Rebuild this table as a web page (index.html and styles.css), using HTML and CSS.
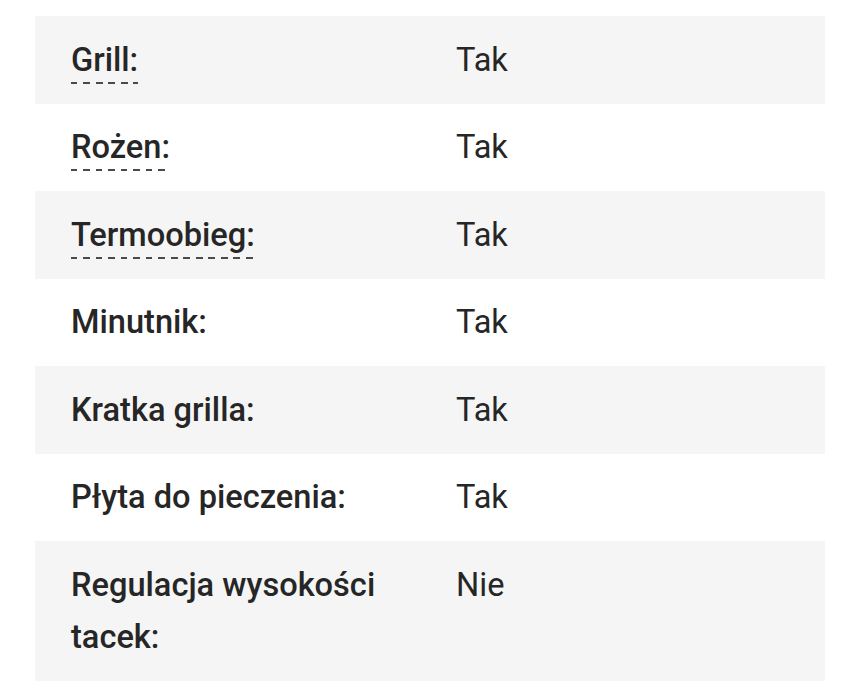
FILE: index.html
```html
<!DOCTYPE html>
<html lang="pl">
<head>
<meta charset="utf-8">
<link rel="stylesheet" href="styles.css">
</head>
<body>
<div class="page">
  <div class="specs">
    <div class="row"><div class="label"><span class="hint">Grill:</span></div><div class="value">Tak</div></div>
    <div class="row"><div class="label"><span class="hint">Rożen:</span></div><div class="value">Tak</div></div>
    <div class="row"><div class="label"><span class="hint">Termoobieg:</span></div><div class="value">Tak</div></div>
    <div class="row"><div class="label">Minutnik:</div><div class="value">Tak</div></div>
    <div class="row"><div class="label">Kratka grilla:</div><div class="value">Tak</div></div>
    <div class="row"><div class="label">Płyta do pieczenia:</div><div class="value">Tak</div></div>
    <div class="row"><div class="label">Regulacja wysokości tacek:</div><div class="value">Nie</div></div>
  </div>
</div>
</body>
</html>
```
FILE: styles.css
```css
html, body {
  margin: 0;
  padding: 0;
  background: #ffffff;
}
.page {
  padding: 16px 35px;
  font-family: Roboto, "Noto Sans", sans-serif;
  color: #262626;
  font-size: 32.6px;
  line-height: 52.5px;
}
.specs {
  display: flex;
  flex-direction: column;
}
.row {
  display: grid;
  grid-template-columns: 421px 1fr;
  padding: 17.5px 0;
}
.row:nth-child(odd) {
  background: #f5f5f5;
}
.label {
  padding-left: 36px;
  padding-right: 20px;
  font-weight: 500;
}
.value {
  font-weight: 400;
}
.hint {
  padding-bottom: 5px;
  background-image: repeating-linear-gradient(to right, #4a4a4a 0 6.5px, transparent 6.5px 12.5px);
  background-size: 100% 2px;
  background-position: left bottom;
  background-repeat: no-repeat;
}
```
